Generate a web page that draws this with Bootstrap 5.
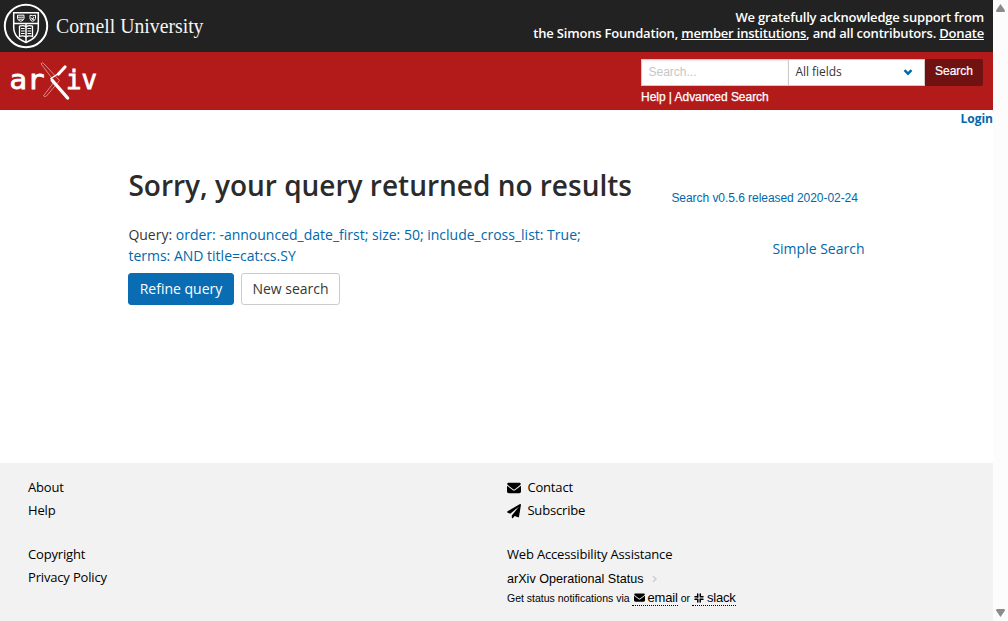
<!DOCTYPE html>
<html lang="en">
<head>
<meta charset="utf-8">
<title>Search | arXiv e-print repository</title>
<link href="https://cdn.jsdelivr.net/npm/bootstrap@5.3.0/dist/css/bootstrap.min.css" rel="stylesheet">
<script src="https://cdn.jsdelivr.net/npm/bootstrap@5.3.0/dist/js/bootstrap.bundle.min.js"></script>
<style>
body{font-family:"Open Sans",sans-serif;font-size:14px;line-height:21px;color:#363636;height:621px;overflow:hidden}
a{color:#0068ac;text-decoration:none}
svg{display:block;flex:none;overflow:visible}
.arial{font-family:"Liberation Sans",sans-serif}
.topbar{height:52px;background:#222;color:#fff}
.support{font-size:13px;font-weight:600;letter-spacing:-.19px;line-height:16px;padding:9px 9px 0 0}
.support a{color:#fff;text-decoration:underline}
.brandbar{height:58px;background:#b31b1b}
.searchbox{width:342px;margin:7px 10px 0 0}
.searchbox .form-control{height:27px;border:1px solid #ccc;border-right:0;border-radius:0;font-family:"Liberation Sans",sans-serif;font-size:12px;padding:0 7px 2px 6.5px;line-height:24px;min-height:0;flex:0 0 147px;box-shadow:inset 0 1px 2px rgba(10,10,10,.1)}
.searchbox .form-control::placeholder{color:#c6c6c6}
.pickfield{width:137px;background:#fff;border:1px solid #ccc;height:27px;font-size:12px;letter-spacing:-.04px;line-height:18px;padding:0 11px 1px 6.4px}
.searchbox .btn{width:58px;height:27px;background:#701112;color:#fff;font-size:12px;line-height:22px;padding:0 0 3px;border:0;border-radius:0 2px 2px 0;-webkit-text-stroke:.2px #fff}
.helplinks{font-size:12px;letter-spacing:-.04px;line-height:14px;margin-top:4px;color:#fff;-webkit-text-stroke:.25px #fff}
.helplinks a{color:#fff}
.login{font-size:12px;font-weight:700;line-height:18px}
.results{padding:40px 128px 0 128.4px}
.results h1{font-size:28px;font-weight:600;line-height:35px;color:#2b2b2b;width:543px}
.version{font-size:12px;letter-spacing:-.05px;line-height:18px;padding-top:21px}
.queryrow{padding-top:17px}
.simple{padding-top:14px;margin-right:.5px}
.actions{gap:7px;padding-top:7px;margin-left:-.4px}
.results .btn{height:32px;font-size:14px;line-height:20px;padding:5px 0;border-radius:3px}
.btn-refine{width:106px;background:#0a6db3;border-color:#0a6db3;color:#fff}
.btn-fresh{width:99px;background:#fff;border-color:#ccc;color:#363636}
.sitefoot{height:158px;background:#f2f2f2;color:#000;font-size:13px;letter-spacing:-.17px;padding:13px 28px 0}
.sitefoot a{color:#000}
.sitefoot .line{height:23px;line-height:23px}
.nextgroup{margin-top:21px}
.footcol{width:479px}
.iconline{gap:6.4px}
.status{font-size:12.6px;letter-spacing:0;line-height:16px;margin-top:5px}
.notify{font-size:10.5px;letter-spacing:0;line-height:18px;margin-top:2px;height:18px}
.notify a{font-size:13px;border-bottom:1px dotted #000;line-height:15px;gap:2.5px;padding-left:2px;letter-spacing:-.2px;margin-left:2.5px}
.notify a+span{margin-left:3px}
.track{width:15px;background:#fcfcfc;padding:4px 0}
</style>
</head>
<body class="d-flex">
<div class="d-flex flex-column flex-grow-1">
<header>
  <div class="topbar d-flex justify-content-between">
    <svg width="210" height="52" viewBox="0 0 210 52" fill="none" stroke="#fff">
      <circle cx="26" cy="26" r="21.2" stroke-width="2"/>
      <path d="M13.7 12.7H38.3V27C38.3 35 34 39 26 42.5C18 39 13.7 35 13.7 27Z" stroke-width="1.5"/>
      <path d="M13 23.5H39M26 24V42" stroke-width="1.5"/>
      <path d="M17.5 15.2H24V18.5Q23.5 20.7 20.8 21.3Q18 20.7 17.5 18.5ZM18 17.2H23.5M18.5 19.2H23M30 15.2Q33 16.5 35.5 15.2V18.5Q35 20.7 32.5 21.3Q30 20.5 30 18.5ZM31 18L34 19.5M34 17L32 20"/>
      <path d="M19.5 26.2Q23 25 26 26.8Q29 25 32.5 26.2V36.3Q29 35 26 37Q23 35 19.5 36.3Z" stroke-width="1.3"/>
      <path d="M21 28.5H24.7M21 31H24.7M21 33.5H24.7M27.5 28.5H31.2M27.5 31H31.2M27.5 33.5H31.2"/>
      <text x="56" y="33.3" fill="#f5f5f5" stroke="none" font-family="Liberation Serif, serif" font-size="20" textLength="147.5" lengthAdjust="spacingAndGlyphs">Cornell University</text>
    </svg>
    <div class="support text-end">We gratefully acknowledge support from<br>the Simons Foundation, <a href="#">member institutions</a>, and all contributors. <a href="#">Donate</a></div>
  </div>
  <div class="brandbar d-flex justify-content-between">
    <svg width="110" height="58" viewBox="0 0 110 58" fill="#fff">
      <g font-family="DejaVu Sans Mono, monospace" font-size="27" stroke="#fff" stroke-width=".8">
        <text x="9.6" y="36.5" textLength="35" lengthAdjust="spacingAndGlyphs">ar</text>
        <text x="66" y="36.5" textLength="31" lengthAdjust="spacingAndGlyphs">iv</text>
      </g>
      <path d="M41 11.8Q42 9.8 43.7 11.5L59.5 28.5L46.5 44Q44.5 45.5 43.5 43.8L54.5 29.5Z" fill="#b31b1b" stroke="#e5a3a3" stroke-width=".8"/>
      <path d="M65 15L58.5 22" fill="none" stroke="#fff" stroke-width="3.2" stroke-linecap="round"/>
      <path d="M52.3 28.5L67.6 46" fill="none" stroke="#fff" stroke-width="3.4" stroke-linecap="round"/>
      <path d="M58.5 21.5L51 26.5L52 28.5" fill="none" stroke="#fff" stroke-width="1.5"/>
    </svg>
    <div class="searchbox">
      <form class="d-flex">
        <input class="form-control" type="text" placeholder="Search..." aria-label="Search term">
        <div class="pickfield d-flex align-items-center justify-content-between"><span>All fields</span><svg width="10" height="7" viewBox="0 0 9 7"><path d="M1 1.2L4.5 4.7L8 1.2" fill="none" stroke="#0068ac" stroke-width="2.4"/></svg></div>
        <button class="btn arial" type="button">Search</button>
      </form>
      <div class="helplinks arial"><a href="#">Help</a> | <a href="#">Advanced Search</a></div>
    </div>
  </div>
  <div class="login text-end"><a href="#">Login</a></div>
</header>
<main class="results flex-grow-1">
  <div class="d-flex">
    <h1 class="mb-0">Sorry, your query returned no results</h1>
    <a href="#" class="version arial">Search v0.5.6 released 2020-02-24</a>
  </div>
  <div class="queryrow d-flex justify-content-between">
    <div>Query: <a href="#">order: -announced_date_first; size: 50; include_cross_list: True;<br>terms: AND title=cat:cs.SY</a></div>
    <a href="#" class="simple">Simple Search</a>
  </div>
  <div class="d-flex actions">
    <a href="#" class="btn btn-refine">Refine query</a><a href="#" class="btn btn-fresh">New search</a>
  </div>
</main>
<footer class="sitefoot d-flex">
  <div class="footcol">
    <div class="line"><a href="#">About</a></div>
    <div class="line"><a href="#">Help</a></div>
    <div class="line nextgroup"><a href="#">Copyright</a></div>
    <div class="line"><a href="#">Privacy Policy</a></div>
  </div>
  <div>
    <div class="line iconline d-flex align-items-center"><svg width="14" height="14" viewBox="0 0 512 512"><path d="M48 64H464a48 48 0 0 1 19 86L275 307q-19 13-38 0L29 150A48 48 0 0 1 48 64ZM0 176L218 339q38 28 76 0L512 176V384a64 64 0 0 1-64 64H64A64 64 0 0 1 0 384Z"/></svg><a href="#">Contact</a></div>
    <div class="line iconline d-flex align-items-center"><svg width="14" height="14" viewBox="0 0 512 512"><path d="M476 3L12 271c-18 10-16 36 2 43l106 45L408 115c5-5 13 2 8 8L175 417v81c0 23 28 32 42 15l63-77 125 52c14 6 30-3 33-18L511 31c3-20-18-35-35-28Z"/></svg><a href="#">Subscribe</a></div>
    <div class="line nextgroup"><a href="#">Web Accessibility Assistance</a></div>
    <div class="status arial d-flex align-items-center"><a href="#">arXiv Operational Status</a><svg class="ms-2" width="5" height="8" viewBox="0 0 5 8"><path d="M1 1L4 4L1 7" fill="none" stroke="#ccc" stroke-width="1.4"/></svg></div>
    <div class="notify arial d-flex align-items-center"><span>Get status notifications via</span><a href="#" class="d-inline-flex align-items-center"><svg width="11" height="11" viewBox="0 0 512 512"><path d="M48 64H464a48 48 0 0 1 19 86L275 307q-19 13-38 0L29 150A48 48 0 0 1 48 64ZM0 176L218 339q38 28 76 0L512 176V384a64 64 0 0 1-64 64H64A64 64 0 0 1 0 384Z"/></svg>email</a><span>or</span><a href="#" class="d-inline-flex align-items-center"><svg width="10" height="10" viewBox="0 0 10 10"><path d="M3.7 1V4.2M1 3.8H3.5M6.3 1V3.8M6.3 3.8H9M1 6.3H3.8M3.8 6.3V9M6.2 6V9M6.3 6.3H9" fill="none" stroke="#000" stroke-width="1.5" stroke-linecap="round"/></svg>slack</a></div>
  </div>
</footer>
</div>
<div class="track d-flex flex-column justify-content-between align-items-center">
  <svg width="9" height="8" viewBox="0 0 9 8"><path d="M4.5 0L9 6.5Q9 8 8 8H1Q0 8 0 6.5Z" fill="#8b8b8b"/></svg>
  <svg width="9" height="8" viewBox="0 0 9 8"><path d="M4.5 8L9 1.5Q9 0 8 0H1Q0 0 0 1.5Z" fill="#8b8b8b"/></svg>
</div>
</body>
</html>
